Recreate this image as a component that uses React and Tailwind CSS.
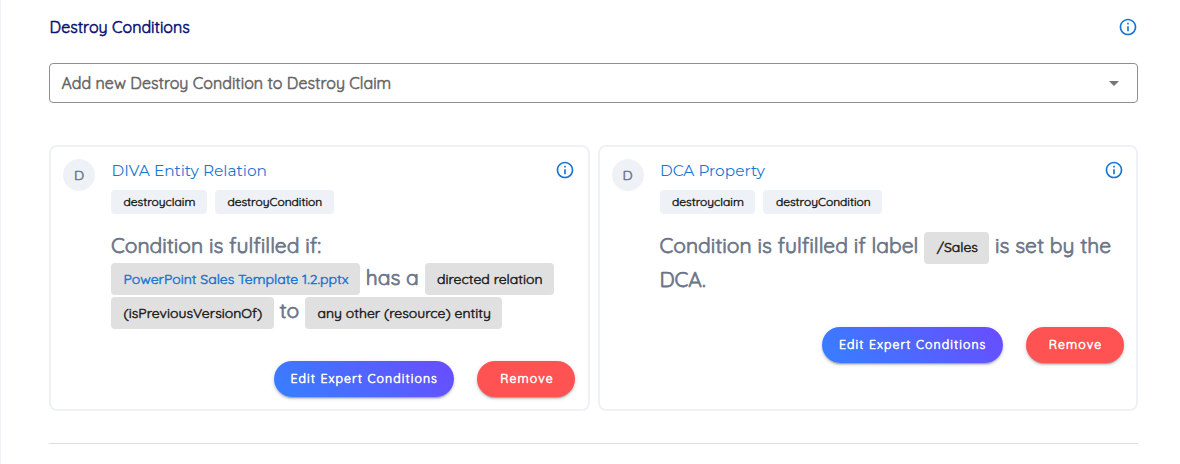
function InfoIcon() {
  return (
    <svg viewBox="0 0 24 24" className="size-5 shrink-0 fill-[#1976d2]" aria-hidden="true">
      <path d="M11 7h2v2h-2zm0 4h2v6h-2zm1-9C6.48 2 2 6.48 2 12s4.48 10 10 10 10-4.48 10-10S17.52 2 12 2m0 18c-4.41 0-8-3.59-8-8s3.59-8 8-8 8 3.590 8 8-3.590 8-8 8" />
    </svg>
  );
}

function Tag({ children }) {
  return (
    <span className="flex h-6 items-center rounded-[4px] bg-[#eef2f7] pr-[11.5px] pl-[12.5px] text-[12px] text-[#212121] [-webkit-text-stroke:0.45px]">
      {children}
    </span>
  );
}

function Chip({ link, children }) {
  return (
    <span
      className={
        link
          ? "inline-flex h-8 items-center rounded-[4px] bg-[#e0e0e0] pt-px pr-[11.5px] pl-[12.5px] align-middle text-[14px] text-[#1976d2] [-webkit-text-stroke:0.5px]"
          : "inline-flex h-8 items-center rounded-[4px] bg-[#e0e0e0] pt-px pr-[11.5px] pl-[12.5px] align-middle text-[14px] text-[#212121] [-webkit-text-stroke:0.5px]"
      }
    >
      {children}
    </span>
  );
}

function ConditionCard({ title, children }) {
  return (
    <section className="flex min-w-0 flex-1 gap-4 rounded-lg border-2 border-[#eef2f7] py-3 pr-[12.5px] pl-3">
      <div className="flex size-8 shrink-0 items-center justify-center rounded-full bg-[#eef2f7] text-[14px] text-[#6b778c]">
        D
      </div>
      <div className="min-w-0 flex-1">
        <div className="flex h-[22px] items-center justify-between">
          <h2 className="pt-[2px] pl-[0.5px] font-[Montserrat,sans-serif] text-[15.4px] text-[#1976d2] [-webkit-text-stroke:0px]">{title}</h2>
          <InfoIcon />
        </div>
        <div className="mt-[9px] flex gap-2">
          <Tag>destroyclaim</Tag>
          <Tag>destroyCondition</Tag>
        </div>
        <p className="mt-4 text-[21px] leading-[31.5px] text-[#6b7588] [-webkit-text-stroke:0.75px]">{children}</p>
        <div className="mt-[32px] flex justify-end gap-[23px]">
          <button className="h-9 w-[180.5px] shrink-0 rounded-full bg-linear-[45deg,#3680ff,#6a4bff] pl-px text-[12.25px] tracking-[1.09px] text-white shadow-[0_3px_1px_-2px_rgba(0,0,0,0.2),0_2px_2px_rgba(0,0,0,0.14),0_1px_5px_rgba(0,0,0,0.12)]">
            Edit Expert Conditions
          </button>
          <button className="h-9 w-[98px] shrink-0 rounded-full bg-[#ff5252] pl-[2px] text-[12.25px] tracking-[1.09px] text-white shadow-[0_3px_1px_-2px_rgba(0,0,0,0.2),0_2px_2px_rgba(0,0,0,0.14),0_1px_5px_rgba(0,0,0,0.12)]">
            Remove
          </button>
        </div>
      </div>
    </section>
  );
}

export default function App() {
  return (
    <main className="h-[464px] border-l border-[#eef2f7] bg-white pr-[42px] pl-12 font-[Quicksand,sans-serif] font-normal [-webkit-text-stroke:0.55px]">
      <div className="flex h-[63px] items-start justify-between pt-[15px]">
        <h1 className="pl-[0.5px] text-[16px] leading-6 text-[#0a1172]">Destroy Conditions</h1>
        <span className="pt-[2px]">
          <InfoIcon />
        </span>
      </div>
      <button className="flex h-10 w-full items-center justify-between rounded-[4px] border border-[#8f8f8f] pr-[11px] pl-[11.5px] text-[16px] text-[#666666]">
        Add new Destroy Condition to Destroy Claim
        <svg viewBox="0 0 24 24" className="size-6 fill-[#757575]" aria-hidden="true">
          <path d="M7 10l5 5 5-5z" />
        </svg>
      </button>
      <div className="mt-[42px] flex h-[266px] gap-2">
        <ConditionCard title="DIVA Entity Relation">
          Condition is fulfilled if:
          <br />
          <Chip link>PowerPoint Sales Template 1.2.pptx</Chip> has a <Chip>directed relation</Chip>
          <br />
          <Chip>(isPreviousVersionOf)</Chip> to <Chip>any other (resource) entity</Chip>
        </ConditionCard>
        <ConditionCard title="DCA Property">
          Condition is fulfilled if label <Chip>/Sales</Chip> is set by the DCA.
        </ConditionCard>
      </div>
      <hr className="mt-8 border-[#dddddd]" />
    </main>
  );
}
